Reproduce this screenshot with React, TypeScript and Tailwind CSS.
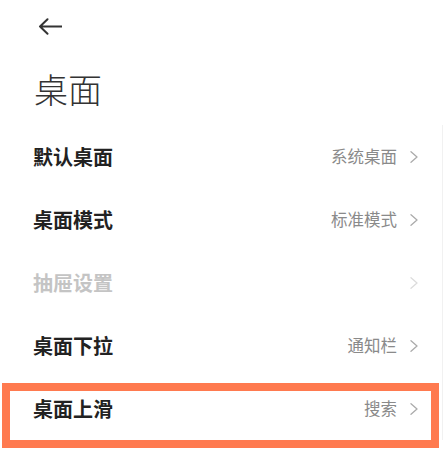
import React from "react";

type Row = { label: string; value?: string; disabled?: boolean };

const rows: Row[] = [
  { label: "默认桌面", value: "系统桌面" },
  { label: "桌面模式", value: "标准模式" },
  { label: "抽屉设置", disabled: true },
  { label: "桌面下拉", value: "通知栏" },
  { label: "桌面上滑", value: "搜索" },
];

function Chevron({ faded }: { faded?: boolean }) {
  return (
    <svg width="8" height="12" viewBox="0 0 8 12" className="shrink-0">
      <path
        d="M1 0.8 L7 6 L1 11.2"
        fill="none"
        stroke={faded ? "#dcdcdc" : "#ababab"}
        strokeWidth="1.3"
        strokeLinecap="round"
        strokeLinejoin="round"
      />
    </svg>
  );
}

export default function App() {
  return (
    <div
      className="relative w-[444px] h-[455px] bg-white overflow-hidden"
      style={{ fontFamily: '"Noto Sans CJK SC", "Noto Sans", sans-serif' }}
    >
      {/* header */}
      <div className="h-[52px] flex items-center pl-[38px]">
        <svg width="24" height="17" viewBox="0 0 24 17">
          <path
            d="M2 8.5 H24 M9.5 1.3 L2 8.5 L9.5 15.7"
            fill="none"
            stroke="#333333"
            strokeWidth="2"
            strokeLinecap="round"
            strokeLinejoin="round"
          />
        </svg>
      </div>

      {/* title */}
      <div className="h-[73px] flex items-center pl-[34px]">
        <span className="text-[34px] leading-none font-light text-[#333333]">
          桌面
        </span>
      </div>

      {/* list */}
      <div className="w-[443px] border-r border-[#f1f1f1]">
        {rows.map((row) => (
          <div
            key={row.label}
            className="h-[63px] flex items-center justify-between pl-[33px] pr-[24px]"
          >
            <span
              className={`text-[20px] leading-none font-semibold ${
                row.disabled ? "text-[#c4c4c4]" : "text-[#222222]"
              }`}
            >
              {row.label}
            </span>
            <div className="flex items-center gap-[13px]">
              {row.value && (
                <span className="text-[16.5px] leading-none text-[#8a8a8a]">
                  {row.value}
                </span>
              )}
              <Chevron faded={row.disabled} />
            </div>
          </div>
        ))}
      </div>

      {/* highlight frame over the last row */}
      <div className="absolute left-[2px] top-[383px] w-[437px] h-[65px] border-[8px] border-[#ff7a4f] pointer-events-none" />
    </div>
  );
}
